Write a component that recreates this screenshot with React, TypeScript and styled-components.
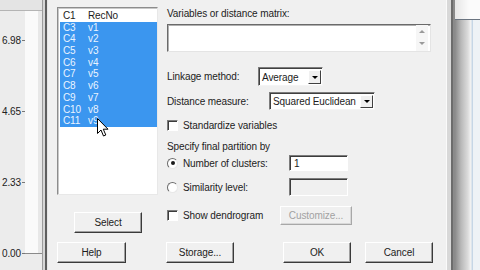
import React from 'react'
import styled, { createGlobalStyle } from 'styled-components'

const GlobalStyle = createGlobalStyle`
  html, body {
    margin: 0;
    padding: 0;
  }
  body {
    width: 480px;
    height: 270px;
    overflow: hidden;
    background: #f0f0f0;
    font-family: "Liberation Sans", Arial, sans-serif;
    font-size: 10px;
    letter-spacing: -0.1px;
    color: #1c1c1c;
  }
`

const Screen = styled.div`
  display: flex;
  width: 480px;
  height: 270px;
  overflow: hidden;
`

/* chart window peeking out on the left */
const Chart = styled.div`
  flex: none;
  width: 42px;
  display: flex;
  flex-direction: column;
  background: #ececec;
`

const ChartTop = styled.div`
  height: 10px;
  background: #e4e4e4;
  border-bottom: 1px solid #b4b4b4;
`

const ChartBody = styled.div`
  display: flex;
  align-items: flex-start;
`

const AxisColumn = styled.div`
  width: 25px;
  display: flex;
  flex-direction: column;
  gap: 59px;
  padding-top: 23px;
`

const Tick = styled.div`
  height: 12px;
  display: flex;
  align-items: center;
  justify-content: flex-end;
  margin-left: -4px;
  font-size: 10px;
  color: #222;
  &::after {
    content: '';
    width: 3px;
    height: 1px;
    margin-left: 1px;
    background: #777;
  }
`

const Plot = styled.div`
  width: 17px;
  height: 242px;
  background: linear-gradient(to right, #fafafa 0 13px, #e8e8e8 13px);
  border-bottom: 1px solid #8a8a8a;
`

const FrameEdge = styled.div`
  flex: none;
  width: 6px;
  background: linear-gradient(
    to right,
    #9c9c9c 0 1px,
    #d6d6d6 1px 3px,
    #5e5e5e 3px 5px,
    #e6e6e6 5px 6px
  );
`

/* dialog */
const Dialog = styled.div`
  flex: none;
  width: 398px;
  background: #f0f0f0;
  padding: 7px 0 0 9px;
  box-sizing: border-box;
  display: flex;
  flex-direction: column;
`

const Main = styled.div`
  display: grid;
  grid-template-columns: 101px 265px;
  column-gap: 9px;
`

const LeftCol = styled.div`
  display: flex;
  flex-direction: column;
`

const ListBox = styled.div`
  position: relative;
  height: 188px;
  background: #fff;
  border: 1px solid;
  border-color: #8c8c8c #e8e8e8 #e8e8e8 #8c8c8c;
  box-shadow: inset 1px 1px 0 #c8c8c8;
  box-sizing: border-box;
  padding: 2px 0 0 2px;
`

const ListRow = styled.div<{ $selected?: boolean }>`
  display: grid;
  grid-template-columns: 25px 1fr;
  height: 11.7px;
  line-height: 11.7px;
  padding-left: 3px;
  background: ${({ $selected }) => ($selected ? '#3b96ef' : 'transparent')};
  color: ${({ $selected }) => ($selected ? '#eaf4ff' : '#1c1c1c')};
`

const Cursor = styled.svg`
  position: absolute;
  left: 39px;
  top: 110px;
`

const RightCol = styled.div`
  display: flex;
  flex-direction: column;
`

const Label = styled.div<{ $top: number }>`
  margin-top: ${({ $top }) => $top}px;
  height: 12px;
  line-height: 12px;
`

const TextArea = styled.div`
  margin-top: 4px;
  height: 28px;
  width: 264px;
  background: #fff;
  border: 1px solid;
  border-color: #6a6a6a #e4e4e4 #e4e4e4 #6a6a6a;
  box-shadow: inset 1px 1px 0 #b0b0b0;
  box-sizing: border-box;
  display: flex;
  justify-content: flex-end;
`

const ScrollArrows = styled.div`
  width: 12px;
  display: flex;
  flex-direction: column;
  justify-content: space-between;
  align-items: center;
  padding: 5px 0 6px;
  margin-right: 2px;
  background: #f6f6f6;
`

const Arrow = styled.div<{ $up?: boolean; $color?: string }>`
  width: 0;
  height: 0;
  border-left: 3px solid transparent;
  border-right: 3px solid transparent;
  ${({ $up, $color }) =>
    $up
      ? `border-bottom: 3px solid ${$color || '#9a9a9a'};`
      : `border-top: 3px solid ${$color || '#9a9a9a'};`}
`

const Row = styled.div<{ $top: number; $h: number }>`
  margin-top: ${({ $top }) => $top}px;
  height: ${({ $h }) => $h}px;
  display: flex;
  align-items: center;
`

const FieldLabel = styled.div<{ $w: number }>`
  flex: none;
  width: ${({ $w }) => $w}px;
`

const Select = styled.div<{ $w: number }>`
  width: ${({ $w }) => $w}px;
  height: 100%;
  background: #fff;
  border: 1px solid;
  border-color: #7c7c7c #f4f4f4 #f4f4f4 #7c7c7c;
  box-shadow: inset 1px 1px 0 #404040;
  box-sizing: border-box;
  display: flex;
  align-items: center;
  padding: 1px 1px 0 3px;
`

const SelectText = styled.span`
  flex: 1;
`

const DropButton = styled.div`
  width: 13px;
  height: calc(100% - 2px);
  background: #f0f0f0;
  border: 1px solid;
  border-color: #fff #404040 #404040 #fff;
  box-sizing: border-box;
  display: flex;
  align-items: center;
  justify-content: center;
`

const CheckBox = styled.div`
  flex: none;
  width: 11px;
  height: 11px;
  margin-right: 5px;
  background: #fff;
  border: 1px solid;
  border-color: #7c7c7c #fff #fff #7c7c7c;
  box-shadow: inset 1px 1px 0 #3c3c3c;
  box-sizing: border-box;
`

const Radio = styled.div<{ $on?: boolean }>`
  flex: none;
  width: 11px;
  height: 11px;
  margin-right: 5px;
  border-radius: 50%;
  background: #fff;
  border: 1px solid;
  border-color: #6c6c6c #e8e8e8 #e8e8e8 #6c6c6c;
  box-sizing: border-box;
  display: flex;
  align-items: center;
  justify-content: center;
  &::after {
    content: '';
    width: 4px;
    height: 4px;
    border-radius: 50%;
    background: ${({ $on }) => ($on ? '#1c1c1c' : 'transparent')};
  }
`

const Input = styled.div<{ $disabled?: boolean }>`
  width: 59px;
  height: 100%;
  background: ${({ $disabled }) => ($disabled ? '#f0f0f0' : '#fff')};
  border: 1px solid;
  border-color: #7c7c7c #fff #fff #7c7c7c;
  box-shadow: inset 1px 1px 0 #3c3c3c;
  box-sizing: border-box;
  padding: 2px 0 0 4px;
`

const Button = styled.div<{ $w: number; $ml?: number; $h?: number; $disabled?: boolean }>`
  flex: none;
  width: ${({ $w }) => $w}px;
  height: ${({ $h }) => $h || 21}px;
  margin-left: ${({ $ml }) => $ml || 0}px;
  background: #f0f0f0;
  border: 1px solid;
  border-color: ${({ $disabled }) =>
    $disabled ? '#fff #a8a8a8 #a8a8a8 #fff' : '#fff #3a3a3a #3a3a3a #fff'};
  box-shadow: ${({ $disabled }) =>
    $disabled ? 'inset -1px -1px 0 #d8d8d8' : 'inset -1px -1px 0 #a0a0a0'};
  box-sizing: border-box;
  display: flex;
  align-items: center;
  justify-content: center;
  color: ${({ $disabled }) => ($disabled ? '#a2a2a2' : '#1c1c1c')};
`

const SelectButton = styled(Button)`
  margin-top: 17px;
`

const Footer = styled.div`
  display: flex;
  margin-top: 9px;
`

/* background window peeking out on the right */
const RightEdge = styled.div`
  flex: 1;
  background: linear-gradient(
    to right,
    #fafafa 0 1px,
    #d8d8d8 1px 5px,
    #6c6c6c 5px 7px,
    #8a8a8a 7px 9px,
    #b8b8b8 15px,
    #dcdcdc 22px,
    #f4f4f4 25px,
    #c6d6e6 26px 27px,
    #eef2f6 27px
  );
  display: flex;
  flex-direction: column;
`

const RightEdgeTop = styled.div`
  height: 19px;
  margin-left: 9px;
  background: linear-gradient(to right, #e6e6e6, #fbfbfb 14px);
  border-bottom: 1px solid #6a7480;
`

const columns: [string, string][] = [
  ['C3', 'v1'],
  ['C4', 'v2'],
  ['C5', 'v3'],
  ['C6', 'v4'],
  ['C7', 'v5'],
  ['C8', 'v6'],
  ['C9', 'v7'],
  ['C10', 'v8'],
  ['C11', 'v9'],
]

const ticks = ['6.98', '4.65', '2.33', '0.00']

export default function App() {
  return (
    <>
      <GlobalStyle />
      <Screen>
        <Chart>
          <ChartTop />
          <ChartBody>
            <AxisColumn>
              {ticks.map((t) => (
                <Tick key={t}>{t}</Tick>
              ))}
            </AxisColumn>
            <Plot />
          </ChartBody>
        </Chart>
        <FrameEdge />
        <Dialog>
          <Main>
            <LeftCol>
              <ListBox>
                <ListRow>
                  <span>C1</span>
                  <span>RecNo</span>
                </ListRow>
                {columns.map(([c, v]) => (
                  <ListRow key={c} $selected>
                    <span>{c}</span>
                    <span>{v}</span>
                  </ListRow>
                ))}
                <Cursor width="12" height="19" viewBox="0 0 12 19">
                  <path
                    d="M0.5 0.5 L0.5 15.5 L4 12 L6.5 18 L8.8 17 L6.3 11.2 L11 11.2 Z"
                    fill="#fff"
                    stroke="#000"
                    strokeWidth="1"
                  />
                </Cursor>
              </ListBox>
              <SelectButton $w={68} $ml={17}>
                Select
              </SelectButton>
            </LeftCol>
            <RightCol>
              <Label $top={1}>Variables or distance matrix:</Label>
              <TextArea>
                <ScrollArrows>
                  <Arrow $up />
                  <Arrow />
                </ScrollArrows>
              </TextArea>
              <Row $top={15} $h={19}>
                <FieldLabel $w={91}>Linkage method:</FieldLabel>
                <Select $w={65}>
                  <SelectText>Average</SelectText>
                  <DropButton>
                    <Arrow $color="#000" />
                  </DropButton>
                </Select>
              </Row>
              <Row $top={6} $h={18}>
                <FieldLabel $w={102}>Distance measure:</FieldLabel>
                <Select $w={106}>
                  <SelectText>Squared Euclidean</SelectText>
                  <DropButton>
                    <Arrow $color="#000" />
                  </DropButton>
                </Select>
              </Row>
              <Row $top={8} $h={14}>
                <CheckBox />
                Standardize variables
              </Row>
              <Label $top={9}>Specify final partition by</Label>
              <Row $top={2} $h={16}>
                <Radio $on />
                <FieldLabel $w={106}>Number of clusters:</FieldLabel>
                <Input>1</Input>
              </Row>
              <Row $top={7} $h={18}>
                <Radio />
                <FieldLabel $w={106}>Similarity level:</FieldLabel>
                <Input $disabled />
              </Row>
              <Row $top={10} $h={19}>
                <CheckBox />
                <FieldLabel $w={97}>Show dendrogram</FieldLabel>
                <Button $w={72} $h={19} $disabled>
                  Customize...
                </Button>
              </Row>
            </RightCol>
          </Main>
          <Footer>
            <Button $w={69}>Help</Button>
            <Button $w={68} $ml={40}>
              Storage...
            </Button>
            <Button $w={68} $ml={49}>
              OK
            </Button>
            <Button $w={68} $ml={14}>
              Cancel
            </Button>
          </Footer>
        </Dialog>
        <RightEdge>
          <RightEdgeTop />
        </RightEdge>
      </Screen>
    </>
  )
}
